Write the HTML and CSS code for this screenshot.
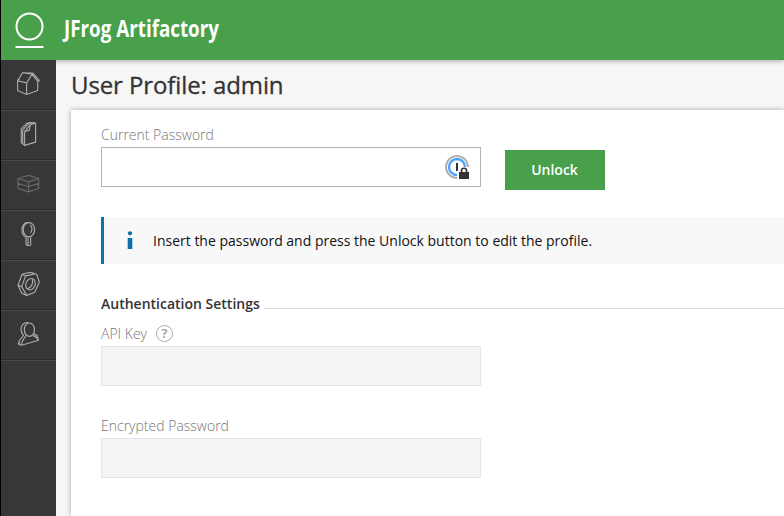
FILE: index.html
```html
<!DOCTYPE html>
<html lang="en">
<head>
<meta charset="utf-8">
<title>JFrog Artifactory</title>
<link rel="stylesheet" href="styles.css">
</head>
<body>
<div class="app">
  <header class="topbar">
    <svg class="logo" viewBox="0 0 30 38"><circle cx="14.5" cy="14.5" r="13"/><path d="M.5 35h28"/></svg>
    <svg class="brand" viewBox="0 0 180 36"><text x="2" y="25" textLength="155" lengthAdjust="spacingAndGlyphs">JFrog Artifactory</text></svg>
  </header>
  <div class="body">
    <nav class="sidebar">
      <a class="item"><svg viewBox="0 0 24 24"><path d="M1.5 8.8 6.6.8 16.5 1l6.8 7.5-1.5 1.2-5.7-7.4-5.5 8.6-9.1-2.1.2 10 9 3.7 11-4V9.2M10.6 10.9v11.4M1.5 8.8l2-1.5M6.6.8l9.5 1.5"/></svg></a>
      <a class="item"><svg viewBox="0 0 24 24"><path d="m8.6 23.4 11-3.3V1.2l-5.2 1.5-5.8 6.8zM8.6 23.4l-1.9-1.6V7.9L12.5 1.8l5.2-1.3 1.9.7M6.7 21.8l-1.4-1.2V6.6l5.5-5.2L15.9.1l1.8.4M8.6 9.5l4.7-1.4 1.1-5.4"/></svg></a>
      <a class="item muted"><svg viewBox="0 0 24 24"><path d="m2 6.5 10.5-3.1L22.7 6.5v10l-10.2 3.4L2 16.5zM2 6.5l10.5 3.4L22.7 6.5M12.5 9.9v10M2 11.3l10.5 3.4 10.2-3.4"/></svg></a>
      <a class="item"><svg viewBox="0 0 24 24"><ellipse cx="12.9" cy="7.7" rx="5.7" ry="7.1"/><path d="M12.2.4C8.5.2 6.1 3.1 6 7.8c0 4.2 1.9 7.1 4.8 7.5M10 14.7v7.5l1.5 1.6 3.1-.6v-8M12 15.6v8M14.2 3.1c2.2 1.1 2.3 5.6.4 7.7"/></svg></a>
      <a class="item"><svg viewBox="0 0 24 24"><path d="m2 13.2 4.1-11L14.6.1l6.2 2.4 2.5 7.8-4.6 10-8 3.1L5.6 21zM6.1 2.2l3.5 1.7 9.2-2M9.6 3.9 5.7 14.6l5 8.8M2 13.2l3.7 1.4"/><ellipse cx="14.5" cy="12.2" rx="4.6" ry="5.8" transform="rotate(22 14.5 12.2)"/><path d="M16.3 7.2c1.5 4-1.2 8.6-4.8 9.6"/></svg></a>
      <a class="item"><svg viewBox="0 0 24 24"><ellipse cx="13.4" cy="7.7" rx="5.1" ry="6.7"/><path d="M12.3.5C7.7.1 4.8 3.4 5 7.4c.1 2.8 1.3 4.8 2.5 6.1-1.5 2.2-4.8 3.8-5.3 8.5l3.4 1.3 16.9-5c-1-2.6-3.5-4-5.7-4.9M9.8 13.2c-.2 3.2-4.5 4.1-4.2 10.1M2.2 22l2-1.5M18.1 12.1l3 1.3 1.4 4.9"/></svg></a>
    </nav>
    <main class="content">
      <h1>User Profile: admin</h1>
      <section class="panel">
        <div class="unlock-row">
          <div class="field">
            <label for="current">Current Password</label>
            <div class="password"><input id="current" type="password">
              <svg viewBox="0 0 26 26"><circle cx="12" cy="12" r="11" fill="none" stroke="#b2b2b2" stroke-width="2"/><circle cx="12" cy="12" r="8" fill="none" stroke="#4ba3fb" stroke-width="2.3"/><path d="M11 8h2v8h-2z" fill="#333"/><path d="M12 17h3v-3l2-2h9v14H12z" fill="#fff"/><path d="M14 17h10v7H14z" fill="#333"/><path d="M16.5 18v-2.5c0-3 5-3 5 0V18" fill="none" stroke="#333" stroke-width="1.7"/></svg>
            </div>
          </div>
          <button type="button">Unlock</button>
        </div>
        <div class="notice">
          <svg viewBox="0 0 6 19"><circle cx="3" cy="2.3" r="2.1"/><path d="M.7 7h4.6v11H.7z"/></svg>
          <span>Insert the password and press the Unlock button to edit the profile.</span>
        </div>
        <h2><span>Authentication Settings</span></h2>
        <div class="field api">
          <label for="api"><span class="api-name">API Key</span><span class="help">?</span></label>
          <input id="api" disabled>
        </div>
        <div class="field encrypted">
          <label for="encrypted">Encrypted Password</label>
          <input id="encrypted" disabled>
        </div>
      </section>
    </main>
  </div>
</div>
</body>
</html>
```
FILE: styles.css
```css
* { box-sizing: border-box; }
body { margin: 0; background: #000; font-family: "Open Sans", sans-serif; overflow: hidden; }
.app { height: 516px; margin-left: 1px; display: flex; flex-direction: column; background: #f6f6f6; overflow: hidden; }
.topbar { height: 60px; flex: none; display: flex; background: #48a04b; box-shadow: 0 1px 5px #0005; position: relative; z-index: 1; }
.logo { width: 30px; height: 38px; margin: 12px 0 0 14px; fill: none; stroke: #fff; stroke-width: 2; }
.brand { width: 180px; height: 36px; margin: 12px 0 0 17px; fill: #fff; font: 700 23px "Open Sans", sans-serif; }
.body { flex: 1; min-height: 0; display: flex; }
.sidebar { width: 55px; flex: none; background: #373737; position: relative; z-index: 2; }
.item { display: block; height: 50px; padding: 12px 15px; box-shadow: inset 0 -1px #2b2b2b, 0 1px #4a4a4a; }
.item svg { display: block; width: 24px; height: 24px; fill: none; stroke: #aaa; stroke-width: 1.15; stroke-linejoin: round; }
.item.muted svg { stroke: #686868; }
.content { flex: 1; min-width: 0; padding-left: 15px; display: flex; flex-direction: column; }
h1 { margin: 0; height: 50px; flex: none; font-size: 24px; font-weight: 500; line-height: 50px; color: #333; letter-spacing: -.1px; -webkit-text-stroke: .3px #333; }
.panel { flex: 1; background: #fff; box-shadow: 0 0 5px #0005; padding: 15px 0 0 30px; }
.unlock-row { display: flex; gap: 24px; height: 92px; }
.field { width: 380px; }
label { display: block; height: 22px; line-height: 20px; font-size: 14px; font-weight: 300; color: #777; }
input { display: block; width: 380px; height: 40px; border: 1px solid #b3b3b3; background: #fff; padding: 0 12px; outline: 0; }
input:disabled { background: #f4f4f4; border-color: #e5e5e5; }
.password { position: relative; }
.password svg { position: absolute; left: 344px; top: 8px; width: 26px; height: 26px; }
button { width: 100px; height: 40px; margin-top: 25px; padding: 0 1px 2px 0; border: 0; background: #48a04b; color: #fff; font: 600 14px "Open Sans", sans-serif; }
.notice { height: 47px; display: flex; align-items: center; border-left: 3px solid #1070a9; background: #f8f8f8; font-size: 14px; color: #111; }
.notice svg { width: 6px; height: 19px; margin: 0 20px 0 23px; fill: #1070a9; }
h2 { height: 20px; margin: 30px 0 10px; display: flex; font-size: 14px; line-height: 20px; font-weight: 600; color: #333; }
h2::after { content: ""; flex: 1; height: 1px; margin: 14px 0 0 4px; background: #ddd; }
.api label { display: flex; }
.help { width: 17px; height: 17px; margin: 1px 0 0 9px; border: 1px solid #aaa; border-radius: 50%; font-size: 13px; line-height: 15px; text-align: center; font-weight: 600; color: #999; }
.encrypted { margin-top: 30px; }
```
